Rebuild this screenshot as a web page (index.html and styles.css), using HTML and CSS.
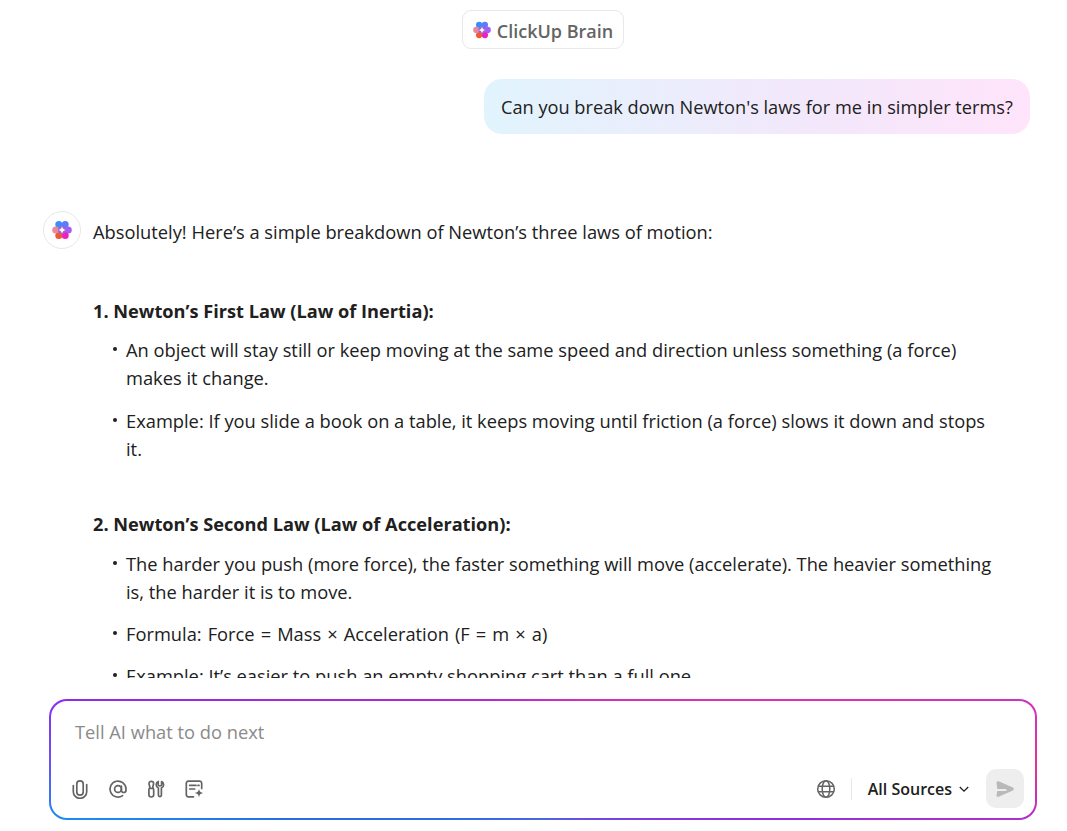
FILE: index.html
```html
<!DOCTYPE html>
<html lang="en">
<head>
<meta charset="utf-8">
<title>ClickUp Brain</title>
<link rel="stylesheet" href="styles.css">
</head>
<body>
<svg class="defs" width="0" height="0" aria-hidden="true">
  <defs>
    <symbol id="brain" viewBox="0 0 20 20">
      <circle cx="6.800" cy="4.400" r="3.500" fill="#3b8dff"/>
      <circle cx="13.200" cy="4.400" r="3.500" fill="#5a7dff"/>
      <circle cx="16.300" cy="10" r="3.500" fill="#a55cf5"/>
      <circle cx="13.200" cy="15.600" r="3.500" fill="#ee1fc4"/>
      <circle cx="6.800" cy="15.600" r="3.500" fill="#ef5a34"/>
      <circle cx="3.700" cy="10" r="3.500" fill="#e88a9c"/>
      <circle cx="10" cy="10" r="4" fill="#a060d0"/>
      <path d="M10 6.300c.5 2.200 1.500 3.200 3.700 3.700-2.200.5-3.200 1.500-3.700 3.700-.5-2.200-1.500-3.200-3.700-3.700 2.200-.5 3.200-1.500 3.700-3.700z" fill="#fff"/>
    </symbol>
  </defs>
</svg>
<main class="chat">
  <header class="chat-head">
    <div class="pill"><svg class="pill-logo"><use href="#brain"/></svg><span class="pill-text">ClickUp Brain</span></div>
  </header>
  <div class="user-row"><div class="bubble">Can you break down Newton's laws for me in simpler terms?</div></div>
  <section class="answer">
    <div class="avatar"><svg class="avatar-logo"><use href="#brain"/></svg></div>
    <div class="answer-body">
      <p class="intro">Absolutely! Here’s a simple breakdown of Newton’s three laws of motion:</p>
      <h3 class="law law-first">1. Newton’s First Law (Law of Inertia):</h3>
      <ul class="points">
        <li>An object will stay still or keep moving at the same speed and direction unless something (a force) makes it change.</li>
        <li>Example: If you slide a book on a table, it keeps moving until friction (a force) slows it down and stops it.</li>
      </ul>
      <h3 class="law law-second">2. Newton’s Second Law (Law of Acceleration):</h3>
      <ul class="points">
        <li>The harder you push (more force), the faster something will move (accelerate). The heavier something is, the harder it is to move.</li>
        <li class="formula">Formula: Force = Mass × Acceleration (F = m × a)</li>
        <li>Example: It’s easier to push an empty shopping cart than a full one.</li>
      </ul>
    </div>
  </section>
</main>
<form class="composer">
  <div class="composer-input">Tell AI what to do next</div>
  <div class="composer-bar">
    <div class="tools">
      <svg class="ico" viewBox="0 0 20 20"><path d="M3.300 6.500v6.200a6.700 6.700 0 0 0 13.400 0V5.500M13.200 12.500V5a3.200 3.200 0 0 0-6.400 0v8a3.200 3.200 0 0 0 6.400 0"/></svg>
      <svg class="ico" viewBox="0 0 20 20"><circle cx="10" cy="10" r="3.400"/><path d="M13.400 7v4.200a2.300 2.300 0 0 0 4.600 0V10a8 8 0 1 0-3.400 6.600"/></svg>
      <svg class="ico" viewBox="0 0 20 20"><path d="M5.300 2.300c1.500 0 2.300 1 2.300 2.300 0 1.400-.8 2-.8 3.300 0 1 .9 1.500.9 3.100v4.800c0 1.200-1 2.200-2.400 2.200s-2.400-1-2.400-2.200V11c0-1.600.9-2.100.9-3.100 0-1.300-.8-1.900-.8-3.300 0-1.300.8-2.300 2.300-2.300zM3.700 9.300h3.200M12.200 2.500v3.200c0 .8.700 1.300 1.700 1.300s1.700-.5 1.700-1.300V2.500c1.300.6 2 1.800 2 3.200 0 1.600-.9 2.800-2.200 3.300v7.100a1.500 1.500 0 0 1-3 0V9c-1.300-.5-2.200-1.700-2.200-3.300 0-1.400.7-2.600 2-3.200z"/></svg>
      <svg class="ico" viewBox="0 0 20 20"><path d="M9.500 17.800H4.300a2 2 0 0 1-2-2V4.200a2 2 0 0 1 2-2h11.400a2 2 0 0 1 2 2v5.300M5.700 6.400h6.300M14 6.400h1M5.700 10h5"/><path class="fill" d="M15 9.800c.4 2.700 1.500 3.900 4.400 4.300-2.900.4-4 1.600-4.400 4.400-.4-2.800-1.500-4-4.400-4.400 2.900-.4 4-1.600 4.400-4.300z"/></svg>
    </div>
    <div class="actions">
      <svg class="ico globe" viewBox="0 0 20 20"><circle cx="10" cy="10" r="8.300"/><ellipse cx="10" cy="10" rx="3.800" ry="8.300"/><path d="M2.400 7.300h15.200M2.400 12.700h15.200"/></svg>
      <span class="divider"></span>
      <button class="sources" type="button">All Sources<svg class="chev" viewBox="0 0 12 12"><path d="M1.800 4l4.200 4.200L10.200 4"/></svg></button>
      <button class="send" type="button" aria-label="Send"><svg class="send-ico" viewBox="0 0 20 20"><path d="M1.500 3.700c0-1.200 1-1.900 2.100-1.400l14.300 6.200c1.300.6 1.300 2.400 0 3L3.600 17.700c-1.100.5-2.100-.2-2.100-1.400l.8-4.200h8.200a1 1 0 0 0 0-2.100H2.300z"/></svg></button>
    </div>
  </div>
</form>
</body>
</html>
```
FILE: styles.css
```css
* { box-sizing: border-box; }
html, body { height: 100%; }
body {
  margin: 0;
  height: 831px;
  overflow: hidden;
  background: #fff;
  color: #202020;
  font-family: "Open Sans", "Noto Sans", sans-serif;
  font-size: 18.300px;
  line-height: 28px;
  display: flex;
  flex-direction: column;
}
.defs { display: block; height: 0; }
.chat { height: 678px; overflow: hidden; flex: none; }
.chat-head { display: flex; justify-content: center; padding: 10px 0 0 19px; }
.pill {
  width: 162px; height: 39px;
  border: 1px solid #e8e8e8; border-radius: 9px;
  display: flex; align-items: center; justify-content: center; gap: 6px;
  color: #646464; font-weight: 600; font-size: 18px;
}
.pill-text { padding-top: 2px; }
.pill-logo { width: 18px; height: 18px; filter: blur(.3px); }
.user-row { display: flex; justify-content: flex-end; padding: 30px 37px 0 0; }
.bubble {
  width: 546px; height: 55px;
  padding: 0 17px;
  display: flex; align-items: center; white-space: nowrap;
  border-radius: 18px;
  font-size: 18.200px;
  background: linear-gradient(90deg, #e1f4fd 0%, #f3e8fb 60%, #ffe4fb 100%);
}
.answer { display: flex; padding: 77px 70px 0 43px; gap: 12px; }
.avatar {
  flex: none; width: 38px; height: 38px; border-radius: 50%;
  border: 1px solid #e8e8e8; display: flex; align-items: center; justify-content: center;
}
.avatar-logo { width: 20px; height: 20px; filter: blur(.3px); }
.answer-body { flex: 1; padding-top: 7px; }
.intro { margin: 0; }
.law { margin: 47px 0 0; font-size: 18.200px; line-height: 28px; font-weight: 700; }
.law-first { margin-top: 51px; }
.points { list-style: none; margin: 11px 0 0; padding: 0 0 0 33px; }
.law-second + .points { margin-top: 12px; }
.points li { position: relative; margin-bottom: 14px; }
.points li:first-child { margin-bottom: 14.500px; }
.formula { word-spacing: 1.300px; }
.points li::before {
  content: ""; position: absolute; left: -13px; top: 11px;
  width: 4px; height: 4px; border-radius: 50%; background: #202020;
}
.composer {
  flex: none;
  margin: 21px 30px 0 49px;
  height: 121px;
  border: 2px solid transparent;
  border-radius: 18px;
  background:
    linear-gradient(#fff, #fff) padding-box,
    conic-gradient(#c82cc8 0deg, #e030b0 80deg, #d030c8 83deg, #e83090 91deg, #b030d0 97deg, #9030d8 103deg, #4a68e0 180deg, #2a6ce0 257deg, #1a8cf0 263deg, #6a50f5 270deg, #8a2cf0 277deg, #a828d8 283deg, #c82cc8 360deg) border-box;
  padding: 18px 11px 10px 19px;
  display: flex; flex-direction: column; justify-content: space-between;
}
.composer-input { padding-left: 5px; color: #8a8a8a; line-height: 26px; }
.composer-bar { display: flex; align-items: center; justify-content: space-between; }
.tools { display: flex; gap: 18px; }
.ico { width: 20px; height: 20px; fill: none; stroke: #646464; stroke-width: 1.700; stroke-linecap: round; stroke-linejoin: round; }
.ico .fill { fill: #646464; stroke: none; }
.actions { display: flex; align-items: center; }
.globe { stroke-width: 1.500; }
.divider { width: 1px; height: 22px; background: #e8e8e8; margin: 0 16px 0 15px; }
.sources {
  border: 0; background: none; padding: 0; font: inherit; color: #202020; font-size: 16px; font-weight: 600;
  display: flex; align-items: center; gap: 6px; margin-right: 16px;
}
.chev { width: 12px; height: 12px; fill: none; stroke: #202020; stroke-width: 1.300; }
.send {
  width: 38px; height: 39px; border: 0; border-radius: 10px; background: #eeeeee;
  display: flex; align-items: center; justify-content: center; padding: 0;
}
.send-ico { width: 20px; height: 20px; fill: #b9b9b9; }
```
